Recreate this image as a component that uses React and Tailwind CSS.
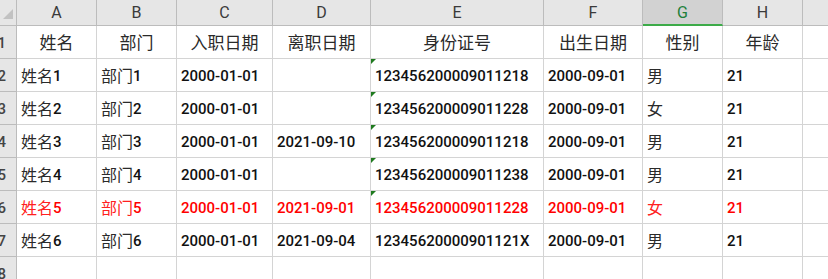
const cols = [
  { key: 'A', w: 'w-[80px]' },
  { key: 'B', w: 'w-[80px]' },
  { key: 'C', w: 'w-[96px]' },
  { key: 'D', w: 'w-[98px]' },
  { key: 'E', w: 'w-[173px]' },
  { key: 'F', w: 'w-[99px]' },
  { key: 'G', w: 'w-[80px]' },
  { key: 'H', w: 'w-[80px]' },
]

const headers = ['姓名', '部门', '入职日期', '离职日期', '身份证号', '出生日期', '性别', '年龄']

const rows = [
  ['姓名1', '部门1', '2000-01-01', '', '123456200009011218', '2000-09-01', '男', '21'],
  ['姓名2', '部门2', '2000-01-01', '', '123456200009011228', '2000-09-01', '女', '21'],
  ['姓名3', '部门3', '2000-01-01', '2021-09-10', '123456200009011218', '2000-09-01', '男', '21'],
  ['姓名4', '部门4', '2000-01-01', '', '123456200009011238', '2000-09-01', '男', '21'],
  ['姓名5', '部门5', '2000-01-01', '2021-09-01', '123456200009011228', '2000-09-01', '女', '21'],
  ['姓名6', '部门6', '2000-01-01', '2021-09-04', '12345620000901121X', '2000-09-01', '男', '21'],
  ['', '', '', '', '', '', '', ''],
]

const font = { fontFamily: 'Roboto, "Noto Sans CJK SC", sans-serif' }

// 中文用细字，数字用中粗
function CellText({ text, red }) {
  const parts = text.match(/[\u4e00-\u9fff]+|[^\u4e00-\u9fff]+/g) || []
  return parts.map((p, i) =>
    /[\u4e00-\u9fff]/.test(p) ? (
      <span key={i} className={`text-[16px] font-normal ${red ? 'text-[#ff2020]' : 'text-[#2a2a2a]'}`}>{p}</span>
    ) : (
      <span key={i} className="text-[15px] font-medium">{p}</span>
    )
  )
}

function RowHead({ n }) {
  return (
    <div className="w-[17px] h-[33px] shrink-0 bg-[#e6e6e6] border-r border-b border-[#bcbcbc] flex items-center justify-end pr-[10px] overflow-hidden pt-[3px]">
      <span className="text-[15px] text-[#444] font-medium">{n}</span>
    </div>
  )
}

export default function App() {
  return (
    <div className="w-[828px] h-[279px] bg-white overflow-hidden" style={font}>
      {/* 列标题 */}
      <div className="flex h-[26px]">
        <div className="w-[17px] shrink-0 bg-[#e6e6e6] border-r border-b border-[#bcbcbc] relative">
          <div className="absolute left-[3px] top-[9px] w-0 h-0 border-l-[10px] border-l-transparent border-b-[10px] border-b-[#c2c2c2]" />
        </div>
        {cols.map(c => (
          <div
            key={c.key}
            className={`${c.w} shrink-0 flex items-center justify-center text-[16px] pt-[1px] border-r ${
              c.key === 'G'
                ? 'bg-[#d2d2d2] text-[#21803a] border-b-2 border-b-[#3dab49] border-r-[#bcbcbc]'
                : 'bg-[#e6e6e6] text-[#3a3a3a] border-b border-[#bcbcbc]'
            }`}
          >
            {c.key}
          </div>
        ))}
        <div className="flex-1 bg-[#e6e6e6] border-b border-[#bcbcbc]" />
      </div>

      {/* 表头行 */}
      <div className="flex h-[33px]">
        <RowHead n="1" />
        {cols.map((c, i) => (
          <div key={c.key} className={`${c.w} shrink-0 border-r border-b border-[#d4d4d4] flex items-center justify-center pt-[4px] text-[17px] text-[#2a2a2a]`}>
            {headers[i]}
          </div>
        ))}
        <div className="flex-1 border-b border-[#d4d4d4]" />
      </div>

      {rows.map((r, ri) => {
        const red = ri === 4
        return (
          <div key={ri} className="flex h-[33px]">
            <RowHead n={ri + 2} />
            {cols.map((c, i) => (
              <div
                key={c.key}
                className={`${c.w} shrink-0 relative border-r border-b border-[#d4d4d4] flex items-center pl-[4px] pt-[3px] whitespace-nowrap overflow-hidden ${
                  red ? 'text-[#ff0000]' : 'text-[#111]'
                }`}
              >
                {c.key === 'E' && ri < 5 && (
                  <div className="absolute -left-px top-0 w-0 h-0 border-t-[6px] border-t-[#1f7a1f] border-r-[6px] border-r-transparent" />
                )}
                <CellText text={r[i]} red={red} />
              </div>
            ))}
            <div className="flex-1 border-b border-[#d4d4d4]" />
          </div>
        )
      })}
    </div>
  )
}
